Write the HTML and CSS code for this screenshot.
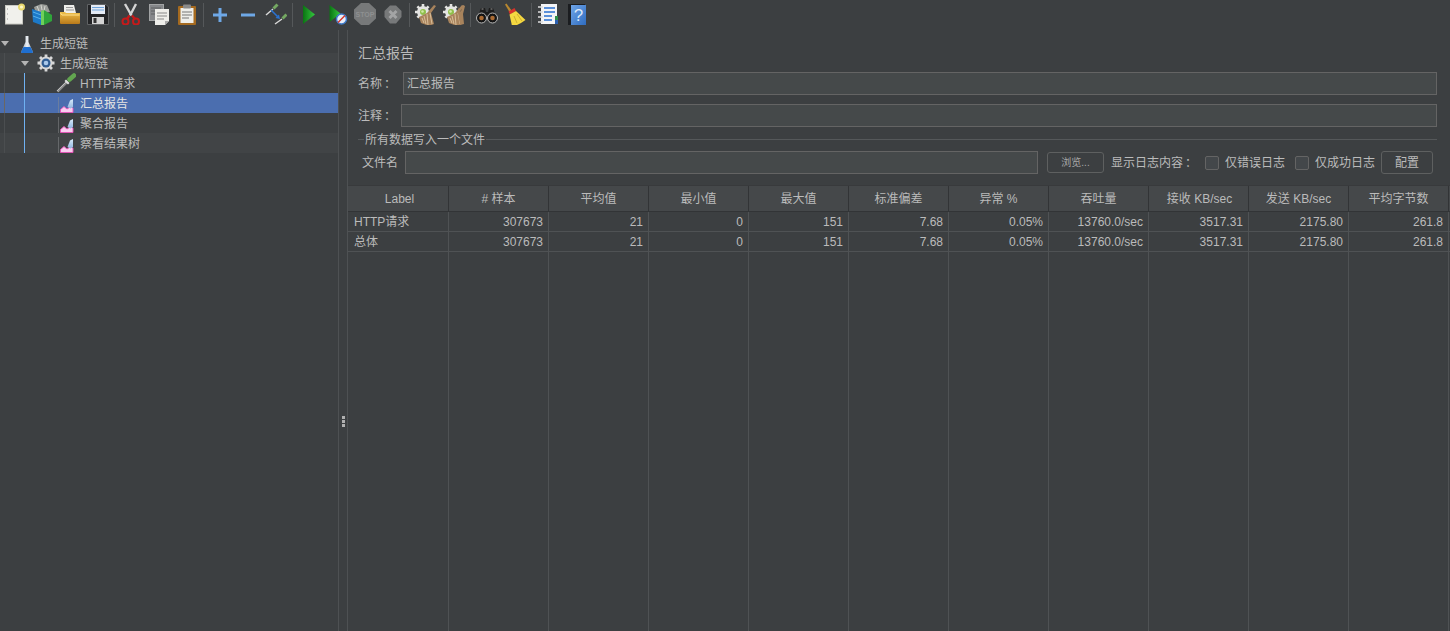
FILE: index.html
```html
<!DOCTYPE html>
<html lang="zh">
<head>
<meta charset="utf-8">
<title>汇总报告</title>
<link rel="stylesheet" href="styles.css">
</head>
<body>
<svg class="defs" width="0" height="0" aria-hidden="true">
  <defs>
    <linearGradient id="gPlay" x1="0" y1="0" x2="1" y2="0"><stop offset="0" stop-color="#0a7412"/><stop offset="1" stop-color="#35c93f"/></linearGradient>
    <linearGradient id="gFolder" x1="0" y1="0" x2="0" y2="1"><stop offset="0" stop-color="#f0c04a"/><stop offset="1" stop-color="#b9791a"/></linearGradient>
    <linearGradient id="gBlue" x1="0" y1="0" x2="1" y2="1"><stop offset="0" stop-color="#6fa5e8"/><stop offset="1" stop-color="#2f6cc0"/></linearGradient>
    <linearGradient id="gPeak" x1="0" y1="0" x2="0" y2="1"><stop offset="0" stop-color="#d9ecfc"/><stop offset="1" stop-color="#8fb4de"/></linearGradient>
    <linearGradient id="gGlass" x1="0" y1="0" x2="1" y2="0"><stop offset="0" stop-color="#8a939f"/><stop offset=".5" stop-color="#eef2f6"/><stop offset="1" stop-color="#9aa3ad"/></linearGradient>
    <g id="gearSmall">
      <circle cx="8" cy="9" r="6" fill="#e4e4e2"/>
      <path d="M8 1v16M0 9h16M2.400 3.400l11.200 11.200M13.600 3.400L2.400 14.600" stroke="#e4e4e2" stroke-width="2.600"/>
      <circle cx="8" cy="9" r="3" fill="#8fc04a"/>
      <circle cx="7.500" cy="8.500" r="1.300" fill="#d2e8a8"/>
    </g>
    <g id="brush">
      <path d="M19 2l2 1-5 7 3 11-5 2-8-3-2-6 8-4z" fill="#a8835c"/>
      <path d="M12 11l1 11M9 13l2 8M15 10l2 11M7 15l2 5" stroke="#d9bf9b" stroke-width="1" fill="none"/>
    </g>
    <g id="report">
      <path d="M.5 .5v15" stroke="#8b8d8e" stroke-dasharray="1 1"/>
      <path d="M2.500 15.500V12.500L6 9.500l3 2.500 4-2.500 2 2v4z" fill="#f9cdf0" stroke="#e850b8" stroke-width=".9"/>
      <path d="M9.500 10L12 3.500 15 2v8l-2.500 1.500z" fill="url(#gPeak)"/>
    </g>
  </defs>
</svg>

<header class="toolbar">
  <span class="tool"><svg viewBox="0 0 22 22" class="ico"><rect x="2.500" y="2.500" width="17" height="18.500" fill="#f1f1ec" stroke="#c9c9c2"/><path d="M4 6h1M4 11h1M4 16h1" stroke="#999"/><circle cx="18.500" cy="4" r="3.500" fill="#e8d86e"/><circle cx="18.500" cy="4" r="1.600" fill="#fff7c4"/></svg></span>
  <span class="tool"><svg viewBox="0 0 22 22" class="ico"><path d="M3 4l7-3 6 1 3 7-14 2z" fill="#9a9c98"/><path d="M6 3l2 5M10 2l1 5M14 3l-1 5" stroke="#d5d5d0"/><path d="M1 6l9 3v13l-8-3z" fill="#1c79c8"/><path d="M2 9l8 3M2 13l8 3" stroke="#58b3ee"/><path d="M10 8l3-1v15h-3z" fill="#70d05a"/><path d="M13 7l8 5v6l-8 4z" fill="#2fa53a"/></svg></span>
  <span class="tool"><svg viewBox="0 0 22 22" class="ico"><path d="M5 2h10l2 8H5z" fill="#eeeeea"/><path d="M7 4.500h7M7 7h8" stroke="#999"/><path d="M1 9h5l1 1h14v10q0 1-1 1H2q-1 0-1-1z" fill="url(#gFolder)"/><path d="M1.500 10l1.500 2h17.500" stroke="#ffe08a" fill="none"/></svg></span>
  <span class="tool"><svg viewBox="0 0 22 22" class="ico"><path d="M.5 1.500h18.500l2.500 2.500v17.500H.5z" fill="#232426" stroke="#606264"/><rect x="4" y="2" width="14" height="9" fill="#e4eaf4"/><path d="M5 4.500h12M5 7h12" stroke="#6ea3da"/><rect x="5" y="14" width="12" height="7" fill="#d4d4d4"/><rect x="6.500" y="15" width="3" height="5" fill="#333"/></svg></span>
  <i class="sep"></i>
  <span class="tool"><svg viewBox="0 0 22 22" class="ico"><path d="M5 1l6.500 11.500M16 1L10 12.500" stroke="#d4d4d4" stroke-width="2.400"/><path d="M9.500 12.500L7 16M12 12.500L15 16" stroke="#c51a1a" stroke-width="2.400"/><circle cx="5.500" cy="18.500" r="3" fill="none" stroke="#c51a1a" stroke-width="2"/><circle cx="16" cy="18.500" r="3" fill="none" stroke="#c51a1a" stroke-width="2"/></svg></span>
  <span class="tool"><svg viewBox="0 0 22 22" class="ico"><rect x="1.500" y="1.500" width="14" height="16" fill="#85878a" stroke="#a2a4a5"/><path d="M3 5h10M3 8h10M3 11h10" stroke="#5f6163"/><path d="M7 6h14v12l-4 4H7z" fill="#eeeeea"/><path d="M9 10h10M9 13h10M9 16h7" stroke="#888"/><path d="M21 18l-4 4v-4z" fill="#aaa"/></svg></span>
  <span class="tool"><svg viewBox="0 0 22 22" class="ico"><rect x="2" y="3" width="18" height="19" fill="#a56a1f" rx="1"/><rect x="4.500" y="5" width="13" height="15" fill="#eeeeea"/><path d="M6 9h10M6 12h10M6 15h7" stroke="#777"/><rect x="7" y="1.500" width="8" height="4" rx="1" fill="#8a8a8a"/></svg></span>
  <i class="sep"></i>
  <span class="tool"><svg viewBox="0 0 22 22" class="ico"><path d="M11 5v14M4 12h14" stroke="#6ea8e6" stroke-width="3"/></svg></span>
  <span class="tool"><svg viewBox="0 0 22 22" class="ico"><path d="M4 12h14" stroke="#6ea8e6" stroke-width="3"/></svg></span>
  <span class="tool"><svg viewBox="0 0 22 22" class="ico"><path d="M1 12l7-6M10 21l7-5" stroke="#d8d8d8" stroke-width="1.500"/><path d="M8.500 5.500l4-4M17.500 15.500l4-4" stroke="#74a862" stroke-width="3"/><path d="M6 7l6.500 6.500" stroke="#2a72d0" stroke-width="1.600"/><path d="M15 16l-4.500-1 3.500-3.500z" fill="#2a72d0"/></svg></span>
  <i class="sep"></i>
  <span class="tool"><svg viewBox="0 0 22 22" class="ico"><path d="M5 2l12 9.500L5 21z" fill="url(#gPlay)"/></svg></span>
  <span class="tool"><svg viewBox="0 0 22 22" class="ico"><path d="M3.500 2l11 8.500-11 8.500z" fill="url(#gPlay)"/><circle cx="15.500" cy="16" r="5" fill="#e8eef8" stroke="#3d79c9" stroke-width="1.500"/><path d="M12 19.500l7-7" stroke="#d8362a" stroke-width="1.500"/></svg></span>
  <span class="tool"><svg viewBox="0 0 22 22" class="ico"><path d="M7 0h8l7 6.500v9L15 22H7L0 15.500v-9z" fill="#77797a"/><text x="11" y="14" class="stopword">STOP</text></svg></span>
  <span class="tool"><svg viewBox="0 0 22 22" class="ico"><path d="M8 2.500h6l5.500 5.500v6L14 20.500H8L2.500 14V8z" fill="#77797a"/><path d="M7.500 8l7 7M14.500 8l-7 7" stroke="#a3a4a5" stroke-width="3"/></svg></span>
  <i class="sep"></i>
  <span class="tool"><svg viewBox="0 0 22 22" class="ico"><use href="#gearSmall"/><use href="#brush"/></svg></span>
  <span class="tool"><svg viewBox="0 0 22 22" class="ico"><use href="#gearSmall"/><use href="#brush"/><path d="M15 3l1 6 2-1 2-6 2 1-2 8 1 10-4 1-2-12z" fill="#a8835c"/></svg></span>
  <i class="sep"></i>
  <span class="tool"><svg viewBox="0 0 22 22" class="ico"><path d="M5 5h4l1 4h2l1-4h4l4 11H1z" fill="#1d1d1d"/><path d="M5.500 6h2M14.500 6h2" stroke="#9a9a9a"/><circle cx="5.500" cy="15" r="5" fill="#141414" stroke="#b8b8b8"/><circle cx="16.500" cy="15" r="5" fill="#141414" stroke="#b8b8b8"/><circle cx="5.500" cy="15" r="2.300" fill="#a96a32"/><circle cx="16.500" cy="15" r="2.300" fill="#a96a32"/></svg></span>
  <span class="tool"><svg viewBox="0 0 22 22" class="ico"><path d="M1 1.500l1.500-1 5 7-2 1.500z" fill="#b8872f"/><path d="M4.500 8.500l6-3.500 1.500 3-6 3.500z" fill="#d8312b"/><path d="M5.500 11.500L12 8l9.500 9-4.500 3-4 2-5 1z" fill="#f5d840"/><path d="M10 13l3 7M13 11l5 7" stroke="#cdae30" fill="none"/></svg></span>
  <i class="sep"></i>
  <span class="tool"><svg viewBox="0 0 22 22" class="ico"><rect x="4" y="1" width="16" height="20" fill="#f3f4f6"/><path d="M7 5h11M7 9h11M7 13h8M7 17h8" stroke="#2a6fd0" stroke-width="1.400"/><path d="M1 4h5M1 9h5M1 14h5M1 19h5" stroke="#ddd" stroke-width="1.600"/><rect x="18" y="13" width="3" height="4" fill="#2e8f4a"/><rect x="18" y="17" width="3" height="4" fill="#2a5fb0"/></svg></span>
  <span class="tool"><svg viewBox="0 0 22 22" class="ico"><rect x="3" y="1" width="17" height="21" fill="#1b1d20"/><rect x="6" y="2" width="15" height="20" fill="url(#gBlue)"/><text x="13.500" y="18" class="helpword">?</text></svg></span>
</header>

<main class="workspace">
  <nav class="tree">
    <div class="row"><span class="arrow"></span><svg viewBox="0 0 16 20" class="node-ico"><path d="M6.500 2h3v6l4.500 10q0 1-1 1H3q-1 0-1-1L6.500 8z" fill="url(#gGlass)"/><path d="M4.500 13h7l2.500 5q0 1-1 1H3q-1 0-1-1z" fill="#1f6fd0"/></svg><span class="label">生成短链</span></div>
    <div class="row alt lvl1 trunk"><span class="arrow"></span><svg viewBox="0 0 20 20" class="node-ico gear"><circle cx="10" cy="10" r="6.500" fill="#d8d8d8"/><path d="M10 1.500v17M1.500 10h17M4 4l12 12M16 4L4 16" stroke="#d8d8d8" stroke-width="2.800"/><circle cx="10" cy="10" r="4.500" fill="#2f5c92"/><circle cx="10" cy="10" r="2.300" fill="#a9c8ea"/></svg><span class="label">生成短链</span></div>
    <div class="row lvl2 line trunk"><svg viewBox="0 0 20 20" class="leaf-ico"><path d="M1.500 18.500l10-10" stroke="#c9c9c9" stroke-width="2.400"/><path d="M2 18.500l9-9" stroke="#3a3a3a" stroke-width=".8"/><path d="M10 6.500l3.500 3.500-1.500 1.500-3.500-3.500z" fill="#e0e0e0"/><path d="M13.500 6.500l4.500-4" stroke="#62a550" stroke-width="4.500" stroke-linecap="round"/></svg><span class="label">HTTP请求</span></div>
    <div class="row lvl2 line trunk selected"><svg viewBox="0 0 16 16" class="leaf-ico small"><use href="#report"/></svg><span class="label">汇总报告</span></div>
    <div class="row lvl2 line trunk"><svg viewBox="0 0 16 16" class="leaf-ico small"><use href="#report"/></svg><span class="label">聚合报告</span></div>
    <div class="row alt lvl2 line trunk"><svg viewBox="0 0 16 16" class="leaf-ico small"><use href="#report"/></svg><span class="label">察看结果树</span></div>
  </nav>

  <div class="splitter"><span class="grip"><i></i><i></i><i></i></span></div>

  <section class="panel">
    <div class="form">
      <h1 class="title">汇总报告</h1>
      <div class="field name-field"><label>名称<span class="colon">：</span></label><input class="input" value="汇总报告"></div>
      <div class="field comment-field"><label>注释<span class="colon">：</span></label><input class="input" value=""></div>
      <div class="group-title"><span>所有数据写入一个文件</span></div>
      <div class="file-row">
        <label class="file-label">文件名</label>
        <input class="input file-input" value="">
        <button class="btn browse">浏览...</button>
        <span class="log-label">显示日志内容<span class="colon">：</span></span>
        <span class="check"><i class="box"></i>仅错误日志</span>
        <span class="check"><i class="box"></i>仅成功日志</span>
        <button class="btn config">配置</button>
      </div>
    </div>
    <div class="table">
      <div class="tr head">
        <div class="nudge">Label</div><div># 样本</div><div>平均值</div><div>最小值</div><div>最大值</div><div>标准偏差</div><div>异常 %</div><div>吞吐量</div><div class="nudge">接收 KB/sec</div><div>发送 KB/sec</div><div>平均字节数</div>
      </div>
      <div class="tr">
        <div class="first">HTTP请求</div><div>307673</div><div>21</div><div>0</div><div>151</div><div>7.68</div><div>0.05%</div><div>13760.0/sec</div><div>3517.31</div><div>2175.80</div><div>261.8</div>
      </div>
      <div class="tr">
        <div class="first">总体</div><div>307673</div><div>21</div><div>0</div><div>151</div><div>7.68</div><div>0.05%</div><div>13760.0/sec</div><div>3517.31</div><div>2175.80</div><div>261.8</div>
      </div>
      <div class="tr filler">
        <div></div><div></div><div></div><div></div><div></div><div></div><div></div><div></div><div></div><div></div><div></div>
      </div>
    </div>
  </section>
</main>
</body>
</html>
```

FILE: styles.css
```css
* { box-sizing: border-box; }
html, body { margin: 0; height: 100%; }
body {
  width: 1450px;
  height: 631px;
  overflow: hidden;
  display: flex;
  flex-direction: column;
  background: #3c3f41;
  color: #bbbbbb;
  font: 12px/16px "Liberation Sans", "Noto Sans CJK SC", sans-serif;
}
.defs { position: absolute; }

.toolbar { display: flex; align-items: center; height: 30px; flex: none; }
.tool { width: 28px; height: 30px; padding-top: 3px; display: flex; justify-content: center; }
.ico { width: 22px; height: 22px; display: block; }
.sep { width: 1px; height: 24px; margin: 0 2px; background: #55585a; }
.stopword { font: bold 7px "Liberation Sans", sans-serif; fill: #8e9091; text-anchor: middle; }
.helpword { font: 17px "Liberation Sans", sans-serif; fill: #dce8f8; text-anchor: middle; }

.workspace { flex: 1; display: flex; min-height: 0; }
.tree { width: 338px; flex: none; padding-top: 3px; }
.row { height: 20px; display: flex; align-items: center; position: relative; }
.row.alt { background: #414446; }
.row.selected { background: #4b6eaf; color: #e4e4e4; }
.row .arrow {
  width: 0; height: 0; margin: 0 7px 0 1px; flex: none;
  border-left: 4px solid transparent; border-right: 4px solid transparent; border-top: 5px solid #b4b4b4;
}
.node-ico { width: 16px; height: 20px; margin: 1px 5px 0 3px; flex: none; }
.gear { width: 20px; height: 20px; margin: 0 4px 0 0; }
.lvl1 { padding-left: 20px; }
.lvl2 { padding-left: 56px; }
.trunk::after { content: ""; position: absolute; left: 4px; top: 0; bottom: 0; width: 1px; background: #4b4e50; }
.selected.trunk::after { background: #6b6763; }
.line::before { content: ""; position: absolute; left: 24px; top: 0; bottom: 0; width: 1px; background: #6fb1f2; }
.leaf-ico { width: 20px; height: 20px; margin-right: 4px; flex: none; }
.leaf-ico.small { width: 16px; height: 16px; margin: 4px 6px 0 2px; }
.label { white-space: nowrap; margin-top: 2px; }

.splitter { width: 10px; flex: none; padding-top: 386px; border-left: 1px solid #4e5153; border-right: 1px solid #4e5153; display: flex; justify-content: center; }
.grip { display: flex; flex-direction: column; gap: 1px; }
.grip i { display: block; width: 3px; height: 3px; background: #b0b0b0; }

.panel { flex: 1; min-width: 0; display: flex; flex-direction: column; }
.form { padding: 0 13px 0 10px; height: 155px; flex: none; }
.title { margin: 0; padding-top: 14px; height: 42px; font-size: 14px; line-height: 18px; font-weight: 400; }
.field { display: flex; align-items: center; height: 23px; }
.field label { flex: none; white-space: nowrap; }
.colon { font-family: "Noto Sans CJK TC", sans-serif; margin-left: 2px; }
.input {
  flex: 1; min-width: 0; height: 23px; padding: 0 3px 2px; background: #45494a; color: #bbbbbb;
  border: 1px solid #646464; font: inherit; outline: none;
}
.name-field label { width: 45px; }
.comment-field { margin-top: 9px; }
.comment-field label { width: 43px; }
.group-title { height: 1px; margin: 12px 0 11px; background: #55585a; position: relative; display: flex; align-items: center; }
.group-title span { margin-left: 6px; padding: 0 1px; background: #3c3f41; }
.file-row { display: flex; align-items: center; height: 23px; padding-left: 4px; }
.file-label { width: 43px; flex: none; }
.file-input { flex: none; width: 633px; }
.btn {
  background: #3c3f41; color: #bbbbbb; border: 1px solid #5e6060; border-radius: 3px;
  font: inherit; padding: 0; flex: none;
}
.browse { width: 57px; height: 21px; margin-left: 9px; font-size: 10px; color: #a8a8a8; }
.log-label { margin-left: 7px; width: 94px; flex: none; white-space: nowrap; }
.check { display: flex; align-items: center; width: 90px; flex: none; white-space: nowrap; }
.check .box { width: 14px; height: 14px; margin-right: 6px; border: 1px solid #646464; border-radius: 2px; background: #43474a; flex: none; }
.config { width: 52px; height: 23px; margin-left: -4px; }

.table { flex: 1; min-height: 0; display: flex; flex-direction: column; background: #3c3f41; }
.tr { display: flex; height: 20px; flex: none; padding-left: 1px; border-bottom: 1px solid #4f5254; }
.tr > div { width: 100px; flex: none; padding: 1px 5px 0; text-align: right; line-height: 19px; border-right: 1px solid #4f5254; white-space: nowrap; }
.tr > .first { text-align: left; }
.head { height: 27px; background: #45484a; border-top: 1px solid #383a3c; border-bottom: 1px solid #323436; }
.head > div { text-align: center; line-height: 25px; border-right-color: #323436; }
.head > .nudge { padding: 1px 4px 0 6px; }
.filler { flex: 1; border-bottom: 0; }
```
